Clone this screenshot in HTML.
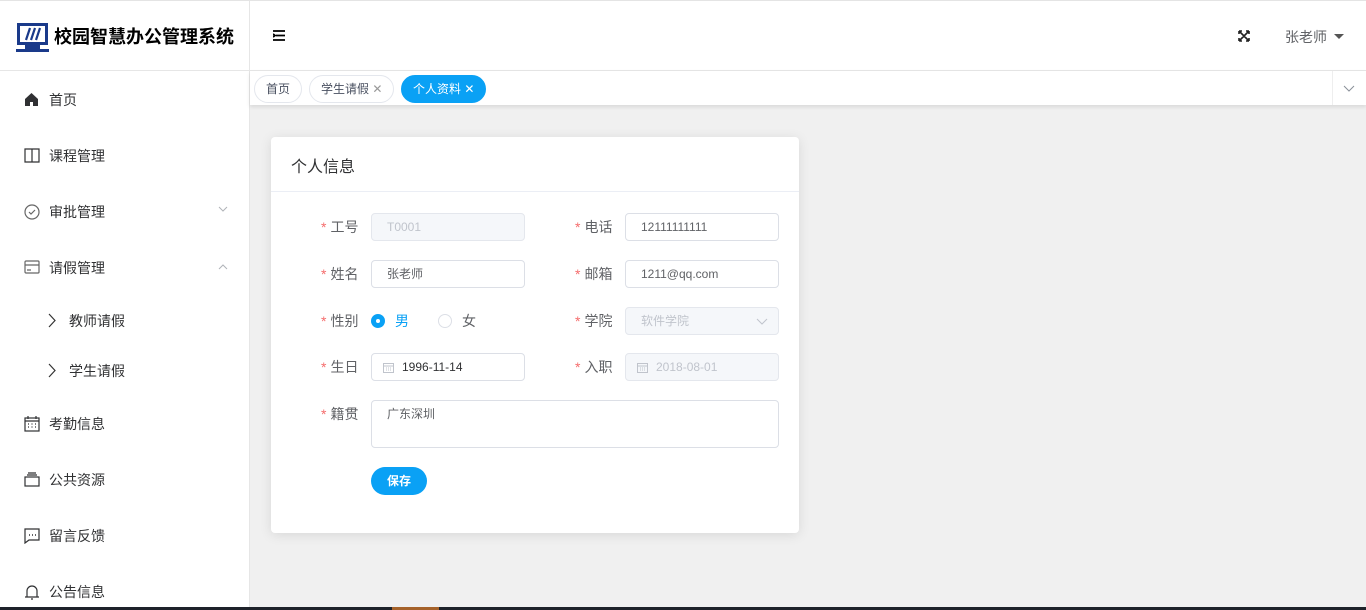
<!DOCTYPE html>
<html><head><meta charset="utf-8"><style>
*{box-sizing:border-box;margin:0;padding:0}
body{width:1366px;height:610px;overflow:hidden;background:#f0f0f0;font-family:"Liberation Sans","Noto Sans CJK SC",sans-serif;font-size:14px;color:#303133;position:relative}
.abs{position:absolute}
.side{left:0;top:0;width:250px;height:610px;background:#fff;border-right:1px solid #e6e6e6}
.hdr{left:250px;top:0;width:1116px;height:71px;background:#fff;border-bottom:1px solid #e6e6e6;border-top:1px solid #e4e4e4}
.logo{left:0;top:0;width:250px;height:71px;border-bottom:1px solid #e6e6e6;border-top:1px solid #e4e4e4}
.mi{position:absolute;left:0;width:249px;height:20px;font-size:14px;color:#303133}
.mi svg{position:absolute;left:24px;top:2px}
.mi span{position:absolute;left:49px;top:0;line-height:20px}
.tabs{left:250px;top:71px;width:1116px;height:34px;background:#fff;box-shadow:0 2px 4px rgba(0,0,0,.1)}
.tab{position:absolute;top:4px;height:28px;border:1px solid #e4e7ed;border-radius:14px;font-size:12px;color:#495060;line-height:26px;padding:0 11px;background:#fff;white-space:nowrap}
.card{left:271px;top:137px;width:528px;height:396px;background:#fff;border-radius:4px;box-shadow:0 2px 12px rgba(0,0,0,.1)}
.lbl{position:absolute;font-size:14px;color:#606266;line-height:28px}
.lbl b{color:#f56c6c;font-weight:normal;margin-right:4px}
.inp{position:absolute;width:154px;height:28px;border:1px solid #dcdfe6;border-radius:4px;font-size:12px;color:#606266;line-height:26px;padding-left:15px;background:#fff}
.dis{background:#f5f7fa;border-color:#e4e7ed;color:#c0c4cc}
</style></head><body>
<div class="abs side"></div>
<div class="abs logo">
<svg class="abs" style="left:16px;top:21px" width="33" height="31" viewBox="0 0 33 31"><rect x="1" y="1" width="31" height="22" fill="#1a3a8a"/><rect x="4" y="4" width="25" height="16" fill="#fff"/><path d="M10 18l4-12M15 18l4-12M20 18l4-12" stroke="#1a3a8a" stroke-width="2.2"/><rect x="9" y="23" width="15" height="5" fill="#1a3a8a"/><rect x="0" y="27" width="33" height="3" fill="#1a3a8a"/></svg>
<div class="abs" style="left:54px;top:24px;font-size:18px;font-weight:bold;color:#000;line-height:24px">校园智慧办公管理系统</div>
</div>
<div class="abs hdr">
<svg class="abs" style="left:23px;top:29px" width="12" height="11" viewBox="0 0 12 11"><path d="M0 1h12M3 5.5h9M0 10h12M0 4l2 1.5L0 7" stroke="#000" stroke-width="1.8" fill="none"/></svg>
<svg class="abs" style="left:988px;top:29px" width="12" height="12" viewBox="0 0 12 12"><path d="M1 1l10 10M11 1L1 11M1 1h3M1 1v3M11 1h-3M11 1v3M1 11h3M1 11v-3M11 11h-3M11 11v-3" stroke="#222" stroke-width="1.6"/></svg>
<div class="abs" style="left:1035px;top:26px;font-size:14px;color:#606266">张老师</div>
<div class="abs" style="left:1084px;top:33px;width:0;height:0;border-left:5px solid transparent;border-right:5px solid transparent;border-top:5px solid #555"></div>
</div>
<div class="mi" style="top:90px"><svg width="15" height="15" viewBox="0 0 15 15"><path d="M1 7L7.5 1 14 7V14H9V10H6V14H1Z" fill="#303133"/></svg><span>首页</span></div>
<div class="mi" style="top:146px"><svg width="16" height="15" viewBox="0 0 16 15"><path d="M1 1h14v13H1zM8 1v13" stroke="#303133" fill="none" stroke-width="1.2"/></svg><span>课程管理</span></div>
<div class="mi" style="top:202px"><svg width="16" height="16" viewBox="0 0 16 16"><circle cx="8" cy="8" r="7" stroke="#666" fill="none" stroke-width="1.2"/><path d="M5 8l2 2 4-4" stroke="#666" fill="none" stroke-width="1.2"/></svg><span>审批管理</span></div>
<svg class="abs" style="left:218px;top:206px" width="10" height="6" viewBox="0 0 10 6"><path d="M1 1l4 4 4-4" stroke="#b0b3b8" fill="none"/></svg>
<div class="mi" style="top:258px"><svg width="16" height="14" viewBox="0 0 16 14"><rect x="1" y="1" width="14" height="12" rx="1" stroke="#666" fill="none" stroke-width="1.2"/><path d="M1 5h14M3 10h4" stroke="#666" stroke-width="1.2"/></svg><span>请假管理</span></div>
<svg class="abs" style="left:218px;top:264px" width="10" height="6" viewBox="0 0 10 6"><path d="M1 5l4-4 4 4" stroke="#b0b3b8" fill="none"/></svg>
<svg class="abs" style="left:48px;top:313px" width="8" height="15" viewBox="0 0 8 15"><path d="M1 1l6 6.5L1 14" stroke="#333" fill="none" stroke-width="1.2"/></svg>
<div class="abs" style="left:69px;top:311px;line-height:20px;color:#303133">教师请假</div>
<svg class="abs" style="left:48px;top:363px" width="8" height="15" viewBox="0 0 8 15"><path d="M1 1l6 6.5L1 14" stroke="#333" fill="none" stroke-width="1.2"/></svg>
<div class="abs" style="left:69px;top:361px;line-height:20px;color:#303133">学生请假</div>
<div class="mi" style="top:414px"><svg width="16" height="16" viewBox="0 0 16 16"><rect x="1" y="2" width="14" height="13" stroke="#303133" fill="none" stroke-width="1.2"/><path d="M1 5h14M4 0v3M12 0v3M4 8h1M7.5 8h1M11 8h1M4 11h1M7.5 11h1M11 11h1" stroke="#303133" stroke-width="1.2"/></svg><span>考勤信息</span></div>
<div class="mi" style="top:470px"><svg width="16" height="15" viewBox="0 0 16 15"><rect x="1" y="5" width="14" height="9" stroke="#303133" fill="none" stroke-width="1.2"/><path d="M3 3h10M4 1h8" stroke="#303133" stroke-width="1.2"/></svg><span>公共资源</span></div>
<div class="mi" style="top:526px"><svg width="16" height="16" viewBox="0 0 16 16"><path d="M1 1h14v11H5l-4 3z" stroke="#303133" fill="none" stroke-width="1.2"/><path d="M5 7h1M8 7h1M11 7h1" stroke="#303133" stroke-width="1.4"/></svg><span>留言反馈</span></div>
<div class="mi" style="top:582px"><svg width="16" height="16" viewBox="0 0 16 16"><path d="M3 13V7a5 5 0 0 1 10 0v6M1 13h14M7 15h2" stroke="#303133" fill="none" stroke-width="1.2"/></svg><span>公告信息</span></div>

<div class="abs tabs">
<div class="tab" style="left:4px">首页</div>
<div class="tab" style="left:59px">学生请假 <span style="color:#999">✕</span></div>
<div class="tab" style="left:151px;background:#0aa1f5;border-color:#0aa1f5;color:#fff">个人资料 <span>✕</span></div>
<div class="abs" style="left:1082px;top:0;width:34px;height:34px;border-left:1px solid #eee;background:#fff"></div>
<svg class="abs" style="left:1093px;top:14px" width="12" height="7" viewBox="0 0 12 7"><path d="M1 1l5 5 5-5" stroke="#8a9099" fill="none"/></svg>
</div>

<div class="abs card">
<div class="abs" style="left:20px;top:16px;font-size:16px;color:#303133">个人信息</div>
<div class="abs" style="left:0;top:54px;width:528px;height:1px;background:#ebeef5"></div>
<div class="lbl" style="left:50px;top:76px"><b>*</b>工号</div>
<div class="inp dis" style="left:100px;top:76px">T0001</div>
<div class="lbl" style="left:304px;top:76px"><b>*</b>电话</div>
<div class="inp" style="left:354px;top:76px">12111111111</div>
<div class="lbl" style="left:50px;top:123px"><b>*</b>姓名</div>
<div class="inp" style="left:100px;top:123px">张老师</div>
<div class="lbl" style="left:304px;top:123px"><b>*</b>邮箱</div>
<div class="inp" style="left:354px;top:123px">1211@qq.com</div>
<div class="lbl" style="left:50px;top:170px"><b>*</b>性别</div>
<div class="abs" style="left:100px;top:177px;width:14px;height:14px;border-radius:50%;background:#0aa1f5"><div class="abs" style="left:5px;top:5px;width:4px;height:4px;border-radius:50%;background:#fff"></div></div>
<div class="abs" style="left:124px;top:174px;color:#0aa1f5;line-height:20px">男</div>
<div class="abs" style="left:167px;top:177px;width:14px;height:14px;border-radius:50%;border:1px solid #dcdfe6"></div>
<div class="abs" style="left:191px;top:174px;color:#606266;line-height:20px">女</div>
<div class="lbl" style="left:304px;top:170px"><b>*</b>学院</div>
<div class="inp dis" style="left:354px;top:170px">软件学院<svg class="abs" style="left:130px;top:10px" width="12" height="7" viewBox="0 0 12 7"><path d="M1 1l5 5 5-5" stroke="#c0c4cc" fill="none"/></svg></div>
<div class="lbl" style="left:50px;top:216px"><b>*</b>生日</div>
<div class="inp" style="left:100px;top:216px;padding-left:30px;color:#303133">1996-11-14<svg class="abs" style="left:11px;top:8px" width="11" height="11" viewBox="0 0 11 11"><rect x=".5" y="1.5" width="10" height="9" stroke="#c0c4cc" fill="none"/><path d="M.5 4h10M3 6h1M5 6h1M7 6h1M3 8h1M5 8h1M7 8h1" stroke="#c0c4cc"/></svg></div>
<div class="lbl" style="left:304px;top:216px"><b>*</b>入职</div>
<div class="inp dis" style="left:354px;top:216px;padding-left:30px">2018-08-01<svg class="abs" style="left:11px;top:8px" width="11" height="11" viewBox="0 0 11 11"><rect x=".5" y="1.5" width="10" height="9" stroke="#c0c4cc" fill="none"/><path d="M.5 4h10M3 6h1M5 6h1M7 6h1M3 8h1M5 8h1M7 8h1" stroke="#c0c4cc"/></svg></div>
<div class="lbl" style="left:50px;top:263px"><b>*</b>籍贯</div>
<div class="inp" style="left:100px;top:263px;width:408px;height:48px;line-height:26px">广东深圳</div>
<div class="abs" style="left:100px;top:330px;width:56px;height:28px;border-radius:14px;background:#0aa1f5;color:#fff;font-size:12px;text-align:center;line-height:28px;font-weight:bold">保存</div>
</div>
<div class="abs" style="left:0;top:607px;width:1366px;height:3px;background:#1e222a"></div>
<div class="abs" style="left:392px;top:607px;width:47px;height:3px;background:#a5622a"></div>
</body></html>
